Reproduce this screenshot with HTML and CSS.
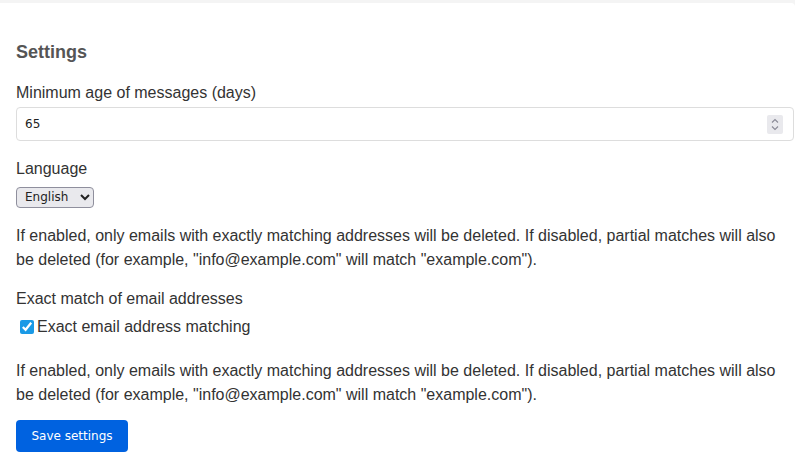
FILE: index.html
```html
<!DOCTYPE html>
<html lang="en">
<head>
    <meta charset="UTF-8">
    <meta name="viewport" content="width=device-width, initial-scale=1.0">
    <title>Settings</title>
    <link rel="stylesheet" href="styles.css">
</head>
<body>

    <div class="card">
        <h2 class="title">Settings</h2>

        <form class="settings">
            <div class="field">
                <label for="min-age">Minimum age of messages (days)</label>
                <div class="number-wrap">
                    <input type="number" id="min-age" class="text-input" value="65">
                    <!-- spinner drawn by hand so it shows without hover -->
                    <span class="spinner">
                        <svg width="8" height="13" viewBox="0 0 8 13">
                            <path d="M1 4.5 L4 1.5 L7 4.5 M1 8.5 L4 11.5 L7 8.5" fill="none" stroke="#8a8a96" stroke-width="1.1"/>
                        </svg>
                    </span>
                </div>
            </div>

            <div class="field">
                <label for="language">Language</label>
                <div class="select-wrap">
                    <select id="language" class="select">
                        <option>English</option>
                        <option>Deutsch</option>
                    </select>
                </div>
            </div>

            <p class="help">If enabled, only emails with exactly matching addresses will be deleted. If disabled, partial matches will also be deleted (for example, "info@example.com" will match "example.com").</p>

            <div class="field">
                <span class="label">Exact match of email addresses</span>
                <label class="check">
                    <input type="checkbox" checked>Exact email address matching
                </label>
            </div>

            <p class="help help-last">If enabled, only emails with exactly matching addresses will be deleted. If disabled, partial matches will also be deleted (for example, "info@example.com" will match "example.com").</p>

            <button type="button" class="btn">Save settings</button>
        </form>
    </div>

</body>
</html>
```

FILE: styles.css
```css
* {
    box-sizing: border-box;
}

body {
    margin: 0;
    padding-top: 3px;
    background-color: #f4f4f4;
    font-family: "Liberation Sans", Arial, sans-serif;
    font-size: 16px;
    line-height: 1.5;
    color: #333;
    overflow: hidden;
}

.card {
    background-color: #fff;
    border-top-right-radius: 4px;
    padding: 35px 1px 12px 16px;
    min-height: 465px;
}

.title {
    margin: 0 0 15px;
    font-size: 18px;
    line-height: 28px;
    color: #555;
}

.field {
    margin-bottom: 16px;
}

.field label,
.field .label {
    display: block;
    margin-bottom: 2px;
}

.number-wrap {
    position: relative;
}

.text-input {
    display: block;
    width: 100%;
    height: 34px;
    padding: 0 8px;
    border: 1px solid #ddd;
    border-radius: 4px;
    font-family: "DejaVu Sans", sans-serif;
    font-size: 12px;
    color: #222;
    -moz-appearance: textfield;
}

.text-input::-webkit-inner-spin-button,
.text-input::-webkit-outer-spin-button {
    -webkit-appearance: none;
    margin: 0;
}

.spinner {
    position: absolute;
    top: 8px;
    right: 11px;
    width: 16px;
    height: 19px;
    display: flex;
    align-items: center;
    justify-content: center;
    background-color: #e9e9ed;
    border-radius: 2px;
}

.select-wrap {
    padding-top: 1px;
}

.select {
    height: 21px;
    width: 78px;
    padding: 0 2px 0 4px;
    border: 1px solid #8f8f9d;
    border-radius: 4px;
    background-color: #e9e9ed;
    color: #222;
    font-family: "DejaVu Sans", sans-serif;
    font-size: 12px;
}

.help {
    margin: 0 0 15px;
}

.help-last {
    margin-bottom: 13px;
}

.field .check {
    display: flex;
    align-items: center;
    margin: 4px 0 20px;
}

.check input {
    width: 14px;
    height: 14px;
    margin: 0 3px 0 4px;
    accent-color: #1a9ae6;
}

.btn {
    height: 32px;
    width: 112px;
    padding: 0;
    border: 0;
    border-radius: 4px;
    background-color: #0062e0;
    color: #fff;
    font-family: "DejaVu Sans", sans-serif;
    font-size: 12px;
    cursor: pointer;
}
```
